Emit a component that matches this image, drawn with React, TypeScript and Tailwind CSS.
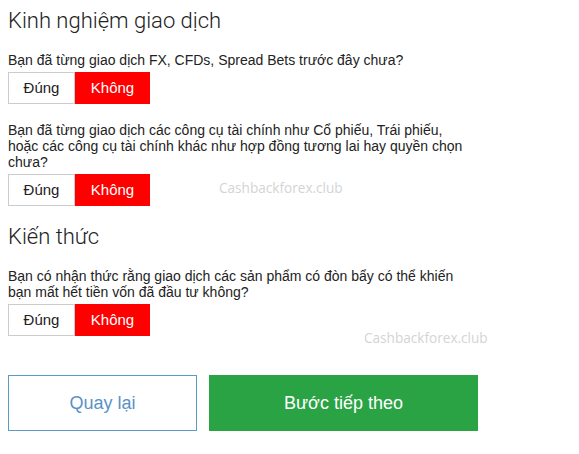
import React, { useState } from 'react'

type Answer = 'yes' | 'no'

function YesNo({ value, onChange }: { value: Answer; onChange: (v: Answer) => void }) {
  return (
    <div className="mt-1 flex">
      <button
        onClick={() => onChange('yes')}
        className={`h-8 w-[67px] border text-[15px] ${
          value === 'yes' ? 'border-[#ff0000] bg-[#ff0000] text-white' : 'border-[#cccccc] bg-white text-[#222]'
        }`}
      >
        Đúng
      </button>
      <button
        onClick={() => onChange('no')}
        className={`h-8 w-[75px] border text-[15px] ${
          value === 'no' ? 'border-[#ff0000] bg-[#ff0000] text-white' : 'border-[#cccccc] bg-white text-[#222]'
        }`}
      >
        Không
      </button>
    </div>
  )
}

function Question({ text, value, onChange }: { text: string; value: Answer; onChange: (v: Answer) => void }) {
  return (
    <div className="mt-[18px] w-[462px]">
      <p className="text-[14px] leading-4 text-[#222]">{text}</p>
      <YesNo value={value} onChange={onChange} />
    </div>
  )
}

export default function App() {
  const [answers, setAnswers] = useState<Answer[]>(['no', 'no', 'no'])

  const setAnswer = (i: number) => (v: Answer) => {
    const next = [...answers]
    next[i] = v
    setAnswers(next)
  }

  return (
    <div className="relative min-h-[454px] bg-white px-2 pt-2 font-['Liberation_Sans',Arial,sans-serif]">
      <h2 className="font-['Roboto',sans-serif] text-[22px] font-light leading-[26px] text-[#222]">
        Kinh nghiệm giao dịch
      </h2>
      <Question
        text="Bạn đã từng giao dịch FX, CFDs, Spread Bets trước đây chưa?"
        value={answers[0]}
        onChange={setAnswer(0)}
      />
      <Question
        text="Bạn đã từng giao dịch các công cụ tài chính như Cổ phiếu, Trái phiếu, hoặc các công cụ tài chính khác như hợp đồng tương lai hay quyền chọn chưa?"
        value={answers[1]}
        onChange={setAnswer(1)}
      />

      <h2 className="mt-[18px] font-['Roboto',sans-serif] text-[22px] font-light leading-[26px] text-[#222]">
        Kiến thức
      </h2>
      <Question
        text="Bạn có nhận thức rằng giao dịch các sản phẩm có đòn bẩy có thể khiến bạn mất hết tiền vốn đã đầu tư không?"
        value={answers[2]}
        onChange={setAnswer(2)}
      />

      <div className="mt-[39px] flex gap-3">
        <button className="h-14 w-[189px] border border-[#5b9bc4] bg-white text-[18px] text-[#5a92c6]">
          Quay lại
        </button>
        <button className="h-14 w-[269px] bg-[#2aa345] text-[18px] text-white">Bước tiếp theo</button>
      </div>

      {/* watermarks */}
      <span className="pointer-events-none absolute left-[219px] top-[178px] font-['Open_Sans',sans-serif] text-[13.6px] text-[#d4d4d4]">
        Cashbackforex.club
      </span>
      <span className="pointer-events-none absolute left-[364px] top-[328px] font-['Open_Sans',sans-serif] text-[13.6px] text-[#d4d4d4]">
        Cashbackforex.club
      </span>
    </div>
  )
}
